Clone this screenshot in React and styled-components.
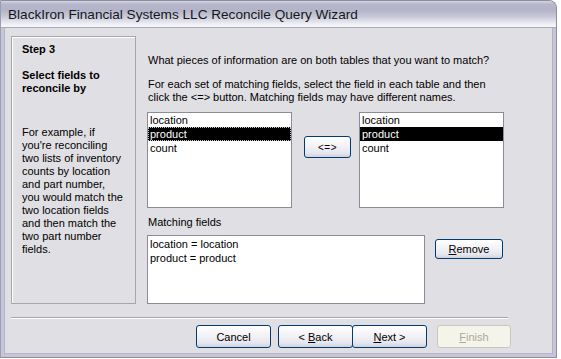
import React from "react";
import styled, { createGlobalStyle } from "styled-components";

const GlobalStyle = createGlobalStyle`
  html, body {
    margin: 0;
    padding: 0;
    background: #ffffff;
  }
  body {
    font-family: "Liberation Sans", Arial, sans-serif;
    font-size: 11px;
    color: #000;
  }
`;

const leftItems = ["location", "product", "count"];
const rightItems = ["location", "product", "count"];
const matches = ["location = location", "product = product"];

const helpLines = [
  "For example, if",
  "you're reconciling",
  "two lists of inventory",
  "counts by location",
  "and part number,",
  "you would match the",
  "two location fields",
  "and then match the",
  "two part number",
  "fields.",
];

const App = () => {
  return (
    <>
      <GlobalStyle />
      <Window>
        <TitleBar>
          <TitleText>BlackIron Financial Systems LLC Reconcile Query Wizard</TitleText>
        </TitleBar>
        <Body>
          <Main>
            <StepPanel>
              <StepTitle>Step 3</StepTitle>
              <StepTitle>
                Select fields to
                <br />
                reconcile by
              </StepTitle>
              <StepHelp>
                {helpLines.map((line) => (
                  <div key={line}>{line}</div>
                ))}
              </StepHelp>
            </StepPanel>

            <Content>
              <Question>
                What pieces of information are on both tables that you want to
                match?
              </Question>
              <Instructions>
                For each set of matching fields, select the field in each table
                and then
                <br />
                click the &lt;=&gt; button. Matching fields may have different
                names.
              </Instructions>

              <ListsRow>
                <ListBox>
                  {leftItems.map((item) => (
                    <ListItem
                      key={item}
                      $selected={item === "product"}
                      $focused={item === "product"}
                    >
                      {item}
                    </ListItem>
                  ))}
                </ListBox>
                <MatchButton>
                  <span>&lt;=&gt;</span>
                </MatchButton>
                <ListBox>
                  {rightItems.map((item) => (
                    <ListItem key={item} $selected={item === "product"}>
                      {item}
                    </ListItem>
                  ))}
                </ListBox>
              </ListsRow>

              <FieldLabel>Matching fields</FieldLabel>
              <MatchRow>
                <MatchBox>
                  {matches.map((m) => (
                    <ListItem key={m}>{m}</ListItem>
                  ))}
                </MatchBox>
                <RemoveButton>
                  <span>
                    <u>R</u>emove
                  </span>
                </RemoveButton>
              </MatchRow>
            </Content>
          </Main>

          <Separator />

          <Footer>
            <WizardButton>
              <span>Cancel</span>
            </WizardButton>
            <ButtonPair>
              <WizardButton>
                <span>
                  &lt; <u>B</u>ack
                </span>
              </WizardButton>
              <WizardButton $joined $width={75}>
                <span>
                  <u>N</u>ext &gt;
                </span>
              </WizardButton>
            </ButtonPair>
            <WizardButton $disabled $width={74}>
              <span>
                <u>F</u>inish
              </span>
            </WizardButton>
          </Footer>
        </Body>
      </Window>
    </>
  );
};

export default App;

// Styled Components
const Window = styled.div`
  width: 557px;
  height: 358px;
  display: flex;
  flex-direction: column;
  box-sizing: border-box;
  border-radius: 0 8px 0 0;
  border: 1px solid #8d8da4;
  border-left: 1px solid #9c9cb4;
  background: #c6c6d6;
  overflow: hidden;
`;

const TitleBar = styled.div`
  height: 26px;
  flex-shrink: 0;
  display: flex;
  align-items: center;
  padding-left: 7px;
  background: linear-gradient(
    to bottom,
    #d6d6e2 0%,
    #b7b7cb 12%,
    #b4b4c8 35%,
    #c8c8d8 60%,
    #eeeef4 88%,
    #f8f8fb 100%
  );
  border-bottom: 1px solid #a9a9bc;
`;

const TitleText = styled.div`
  font-size: 13.6px;
  color: #15151c;
  padding-top: 1px;
`;

const Body = styled.div`
  flex: 1;
  background: #e0dfe3;
  margin: 0 3px 3px 3px;
  border-left: 1px solid #b4b4c6;
  border-right: 1px solid #b4b4c6;
  border-bottom: 1px solid #b4b4c6;
  display: flex;
  flex-direction: column;
`;

const Main = styled.div`
  display: flex;
  padding: 8px 0 0 6px;
`;

const StepPanel = styled.div`
  width: 125px;
  height: 268px;
  flex-shrink: 0;
  box-sizing: border-box;
  border: 1px solid #a6a6ab;
  box-shadow: inset 1px 1px 0 #ffffff;
  padding: 6px 0 0 10px;
`;

const StepTitle = styled.div`
  font-weight: bold;
  font-size: 11px;
  line-height: 13px;
  margin-bottom: 13px;
`;

const StepHelp = styled.div`
  margin-top: 31px;
  line-height: 13px;
  white-space: nowrap;
`;

const Content = styled.div`
  margin-left: 11px;
  padding-top: 18px;
  display: flex;
  flex-direction: column;
`;

const Question = styled.div`
  line-height: 13px;
  margin-left: 1px;
`;

const Instructions = styled.div`
  margin-top: 11px;
  margin-left: 1px;
  line-height: 13px;
`;

const ListsRow = styled.div`
  display: flex;
  align-items: flex-start;
  margin-top: 8px;
`;

const ListBox = styled.div`
  width: 145px;
  height: 96px;
  box-sizing: border-box;
  background: #ffffff;
  border: 1px solid #8c8c98;
`;

const ListItem = styled.div`
  height: 14px;
  line-height: 14px;
  padding-left: 2px;
  white-space: nowrap;
  box-sizing: border-box;
  background: ${(p) => (p.$selected ? "#000000" : "transparent")};
  color: ${(p) => (p.$selected ? "#ffffff" : "#000000")};
  outline: ${(p) => (p.$focused ? "1px dotted #c8c8c8" : "none")};
  outline-offset: -1px;
`;

const XpButton = styled.div`
  box-sizing: border-box;
  display: flex;
  align-items: center;
  justify-content: center;
  border: 1px solid #003c74;
  border-radius: 3px;
  background: linear-gradient(
    to bottom,
    #ffffff 0%,
    #f4f4f8 40%,
    #e6e6ee 80%,
    #d2d2de 100%
  );
  color: #000;
  font-size: 11px;
  white-space: pre;
`;

const MatchButton = styled(XpButton)`
  width: 47px;
  height: 22px;
  margin: 24px 8px 0 12px;
  font-size: 10px;
  letter-spacing: 0.5px;
`;

const FieldLabel = styled.div`
  margin-top: 8px;
  margin-left: 1px;
  line-height: 13px;
`;

const MatchRow = styled.div`
  display: flex;
  align-items: flex-start;
  margin-top: 6px;
`;

const MatchBox = styled(ListBox)`
  width: 278px;
  height: 69px;
  padding-top: 1px;
`;

const RemoveButton = styled(XpButton)`
  width: 68px;
  height: 20px;
  margin: 4px 0 0 10px;
`;

const Separator = styled.div`
  margin: 13px 0 0 6px;
  width: 497px;
  height: 1px;
  background: #a7a6aa;
  border-bottom: 1px solid #ffffff;
`;

const Footer = styled.div`
  display: flex;
  align-items: center;
  padding-left: 191px;
  margin-top: 6px;
`;

const ButtonPair = styled.div`
  display: flex;
  margin-left: 7px;
  margin-right: 10px;
`;

const WizardButton = styled(XpButton)`
  width: ${(p) => p.$width || 75}px;
  height: 23px;
  ${(p) => p.$joined && "margin-left: -1px;"}
  ${(p) =>
    p.$disabled &&
    `
    border-color: #c9c7ba;
    background: #f5f4ea;
    color: #aca899;
  `}
`;
